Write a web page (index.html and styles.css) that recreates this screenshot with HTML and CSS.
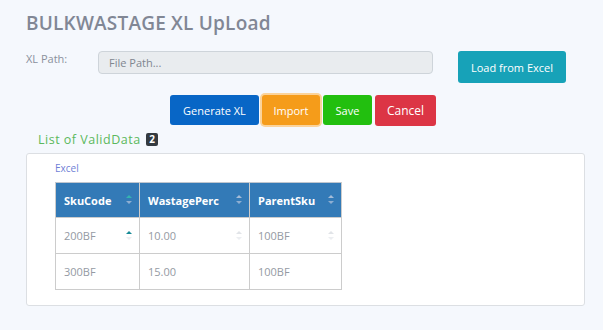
FILE: index.html
```html
<!DOCTYPE html>
<html lang="en">
<head>
    <meta charset="UTF-8">
    <title>BULKWASTAGE XL UpLoad</title>
    <link rel="stylesheet" href="styles.css">
</head>
<body>
    <div class="page">
        <h1 class="title">BULKWASTAGE XL UpLoad</h1>

        <div class="path-row">
            <label class="path-label" for="xlPath">XL Path:</label>
            <input class="path-input" type="text" id="xlPath" placeholder="File Path..." disabled>
            <button class="btn btn-info btn-load">Load from Excel</button>
        </div>

        <div class="actions">
            <button class="btn btn-primary">Generate XL</button>
            <button class="btn btn-warning is-focus">Import</button>
            <button class="btn btn-success">Save</button>
            <button class="btn btn-danger">Cancel</button>
        </div>

        <div class="list-title">List of ValidData <span class="badge">2</span></div>

        <!-- Tabela de dados válidos -->
        <div class="card">
            <div class="excel-link">Excel</div>
            <table class="grid">
                <thead>
                    <tr>
                        <th class="c1">SkuCode <span class="sort active-up"></span></th>
                        <th class="c2">WastagePerc <span class="sort"></span></th>
                        <th class="c3">ParentSku <span class="sort"></span></th>
                    </tr>
                </thead>
                <tbody>
                    <tr>
                        <td>200BF <span class="sort light active-up"></span></td>
                        <td>10.00 <span class="sort light"></span></td>
                        <td>100BF <span class="sort light"></span></td>
                    </tr>
                    <tr>
                        <td>300BF</td>
                        <td>15.00</td>
                        <td>100BF</td>
                    </tr>
                </tbody>
            </table>
        </div>
    </div>
</body>
</html>
```

FILE: styles.css
```css
body {
    margin: 0;
    background: #f5f8fd;
    font-family: "Open Sans", "Noto Sans", sans-serif;
    color: #7d8592;
}

.page {
    padding: 10px 18px 0 26px;
}

.title {
    margin: 0;
    font-size: 19px;
    font-weight: 600;
    color: #818795;
    letter-spacing: 0.2px;
    line-height: 26px;
}

.path-row {
    display: flex;
    align-items: flex-start;
    margin-top: 15px;
}

.path-label {
    width: 72px;
    font-size: 11px;
    line-height: 14px;
    padding-top: 1px;
    color: #8a909c;
}

.path-input {
    width: 335px;
    height: 23px;
    box-sizing: border-box;
    padding: 0 10px;
    border: 1px solid #ced4da;
    border-radius: 4px;
    background: #e9ecef;
    font-family: inherit;
    font-size: 11px;
    color: #7d8592;
}

.path-input::placeholder {
    color: #80868f;
}

.btn {
    border: none;
    border-radius: 3px;
    color: #fff;
    font-family: inherit;
    font-size: 11px;
    padding: 0 10px;
    height: 30px;
    cursor: pointer;
}

.btn-load {
    margin-left: 25px;
    width: 108px;
    height: 32px;
    background: #17a2b8;
}

.actions {
    display: flex;
    gap: 3px;
    margin-top: 12px;
    margin-left: 144px;
}

.btn-primary { background: #0866c6; width: 89px; }
.btn-warning { background: #f59c1a; width: 58px; }
.btn-success { background: #22bf0f; width: 49px; }
.btn-danger  { background: #dc3545; width: 61px; height: 31px; font-size: 12px; }

.is-focus {
    box-shadow: 0 0 0 2px #fbd39a;
}

.list-title {
    margin: 6px 0 0 12px;
    font-size: 12.5px;
    letter-spacing: 0.5px;
    color: #5cb85c;
    line-height: 16px;
}

.badge {
    display: inline-block;
    margin-left: 2px;
    background: #343a40;
    color: #fff;
    font-size: 10px;
    font-weight: 700;
    letter-spacing: 0;
    line-height: 13px;
    padding: 0 3px;
    border-radius: 2px;
    vertical-align: 1px;
}

.card {
    margin-top: 5px;
    width: 559px;
    height: 153px;
    box-sizing: border-box;
    background: #fff;
    border: 1px solid #dcdfe3;
    border-radius: 3px;
    padding: 7px 0 0 28px;
}

.excel-link {
    font-size: 10px;
    color: #6f7fd6;
    line-height: 14px;
}

.grid {
    margin-top: 7px;
    border-collapse: collapse;
    font-size: 11px;
}

.grid th,
.grid td {
    position: relative;
    border: 1px solid #cccccc;
    text-align: left;
    padding: 0 0 0 8px;
}

.grid th {
    height: 34px;
    background: #337ab7;
    color: #fff;
    font-weight: 700;
    font-size: 11px;
    border-top-color: #bfc6cf;
}

.grid td {
    height: 35px;
    color: #949aa3;
}

.grid .c1 { width: 75px; }
.grid .c2 { width: 101px; }
.grid .c3 { width: 83px; }

.sort {
    position: absolute;
    right: 6px;
    top: 50%;
    width: 7px;
    height: 9px;
    margin-top: -5px;
}

.sort::before,
.sort::after {
    content: "";
    position: absolute;
    left: 0;
    border-left: 3.5px solid transparent;
    border-right: 3.5px solid transparent;
}

.sort::before {
    top: 0;
    border-bottom: 3.5px solid #a5bcd8;
}

.sort::after {
    bottom: 0;
    border-top: 3.5px solid #8eaed2;
}

.sort.active-up::before {
    border-bottom-color: #35b3b0;
}

.sort.light::before {
    border-bottom-color: #e1e4e8;
}

.sort.light::after {
    border-top-color: #eceef1;
}

.sort.light.active-up::before {
    border-bottom-color: #178a96;
}
```
